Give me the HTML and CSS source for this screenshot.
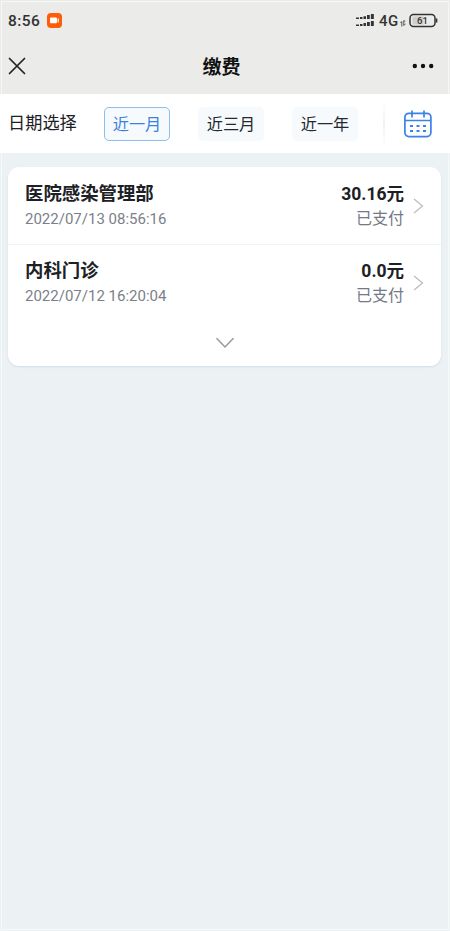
FILE: index.html
```html
<!DOCTYPE html>
<html lang="zh-CN">
<head>
<meta charset="utf-8">
<meta name="viewport" content="width=device-width, initial-scale=1">
<title>缴费</title>
<link rel="stylesheet" href="styles.css">
</head>
<body>
<div class="screen">
  <header class="top">
    <div class="status">
      <span class="clock">8:56</span>
      <svg class="rec" width="15" height="15" viewBox="0 0 15 15"><rect width="15" height="15" rx="4" fill="#ff5c0a"/><rect x="3" y="4.6" width="7" height="5.6" rx="1" fill="#fff"/><path d="M10.400 6.300 12 5v5l-1.600-1.200z" fill="#ffd3b8"/></svg>
      <svg class="signal" width="19" height="16" viewBox="0 0 19 16" fill="#333"><path d="M0 4.500h3v1.500H0zM4 4h2.500v2H4zM7.500 3.200h2.500V6H7.500zM11 2h2.800v4H11zM14.900 1h2.900v5h-2.900zM0 11.500h3V13H0zM4 11h2.500v2H4zM7.500 10h2.500v3H7.500zM11 9h2.800v4H11zM14.900 8h2.900v5h-2.900z"/></svg>
      <span class="network">4G</span>
      <svg class="data" width="6" height="7" viewBox="0 0 6 7" fill="none" stroke="#555" stroke-width="1"><path d="M1.800 6.500V1.500L.3 3M3.800 .5v5L5.600 3.700M3.800 1h1.500"/></svg>
      <svg class="battery" width="30" height="15" viewBox="0 0 30 15"><rect x="1" y="1.500" width="25" height="12" rx="3.500" fill="#ececea" stroke="#333" stroke-width="1.500"/><path d="M3.500 3.500h11v8h-11z" fill="#cececc"/><path d="M27.600 5.500v4" stroke="#333" stroke-width="1.500"/><text x="13.500" y="11.200" text-anchor="middle" class="level">61</text></svg>
    </div>
    <nav class="titlebar">
      <svg class="close" width="18" height="18" viewBox="0 0 18 18"><path d="M1.500 1.500l15 15M16.500 1.500l-15 15" fill="none" stroke="#222" stroke-width="1.700" stroke-linecap="round"/></svg>
      <h1>缴费</h1>
      <svg class="more" width="22" height="6" viewBox="0 0 22 6" fill="#111"><circle cx="2.800" cy="3" r="2.200"/><circle cx="11" cy="3" r="2.200"/><circle cx="19.200" cy="3" r="2.200"/></svg>
    </nav>
  </header>

  <section class="filter">
    <span class="label">日期选择</span>
    <button class="chip active">近一月</button>
    <button class="chip">近三月</button>
    <button class="chip">近一年</button>
    <i class="divider"></i>
    <svg class="calendar" width="30" height="28" viewBox="0 0 30 28" fill="none" stroke="#3b82e8" stroke-width="1.700"><rect x="1.900" y="3.300" width="26" height="23.300" rx="4"/><path d="M2 10.500h26M9 .5v7M21 .5v7"/><path d="M7 16h3M13.500 16h3M20 16h3M7 21h3M13.500 21h3M20 21h3" stroke-width="2"/></svg>
  </section>

  <main class="card">
    <article class="row">
      <div class="info"><h2>医院感染管理部</h2><time>2022/07/13 08:56:16</time></div>
      <div class="pay"><strong>30.16元</strong><span>已支付</span></div>
      <svg class="arrow" width="11" height="16" viewBox="0 0 11 16"><path d="M1 1l8.500 7L1 15" fill="none" stroke="#bdbdbd" stroke-width="1.300"/></svg>
    </article>
    <article class="row">
      <div class="info"><h2>内科门诊</h2><time>2022/07/12 16:20:04</time></div>
      <div class="pay"><strong>0.0元</strong><span>已支付</span></div>
      <svg class="arrow" width="11" height="16" viewBox="0 0 11 16"><path d="M1 1l8.500 7L1 15" fill="none" stroke="#bdbdbd" stroke-width="1.300"/></svg>
    </article>
    <div class="expand"><svg width="20" height="12" viewBox="0 0 20 12"><path d="M1.500 1.300 10 10l8.500-8.700" fill="none" stroke="#999" stroke-width="1.500"/></svg></div>
  </main>
</div>
</body>
</html>
```
FILE: styles.css
```css
* { box-sizing: border-box; }
body {
  margin: 0;
  font-family: Roboto, "Noto Sans CJK SC", sans-serif;
  color: #1d2126;
}
.screen {
  position: relative;
  height: 931px;
  background: #ecf1f4;
  overflow: hidden;
}
.screen::after {
  content: "";
  position: absolute;
  inset: 1px;
  border: 1px solid rgba(255, 255, 255, .55);
  pointer-events: none;
}
h1, h2 { margin: 0; }
svg { display: block; flex: none; }
.top { height: 94px; background: #ebebe9; }
.status {
  display: flex;
  align-items: center;
  height: 40px;
  padding: 0 11px 0 8px;
  color: #333;
}
.clock { width: 39px; margin-top: 2px; font-size: 15.500px; font-weight: 500; letter-spacing: .45px; }
.signal { margin: 2px 4px 0 auto; }
.network { width: 21px; margin-top: 2px; font-size: 15px; font-weight: 500; letter-spacing: .5px; }
.data { margin: 6px 3px 0 0; }
.level { font: 500 9.500px Roboto, sans-serif; fill: #333; }
.titlebar {
  display: grid;
  grid-template-columns: 1fr auto 1fr;
  align-items: center;
  height: 54px;
  padding: 0 16px 0 8px;
}
.titlebar h1 {
  margin: 2px 0 0 1px;
  font-size: 19px;
  line-height: 28px;
  font-weight: 700;
  color: #111;
}
.close { margin-top: -2px; }
.more { justify-self: end; margin-top: -2px; }
.filter {
  display: flex;
  align-items: center;
  height: 59px;
  padding-left: 8px;
  background: #fff;
}
.label { width: 96px; font-size: 17.200px; line-height: 24px; margin-top: -1px; }
.chip {
  width: 66px;
  height: 34px;
  margin-right: 28px;
  padding: 3px 0 0;
  border: 0;
  border-radius: 5px;
  background: #f6fafd;
  color: #25292e;
  font: 16.200px/24px Roboto, "Noto Sans CJK SC", sans-serif;
}
.chip.active { border: 1px solid #8abff0; color: #3b82e0; }
.divider {
  width: 2px;
  height: 48px;
  margin: 0 18px 0 -3px;
  background: linear-gradient(#fff, #f0f1f3 50%, #fff);
}
.card {
  height: 199px;
  margin: 14px 9px 0 8px;
  background: #fff;
  border-radius: 11px;
  box-shadow: 0 1px 2px rgba(180, 195, 215, .45);
}
.row {
  display: flex;
  height: 77px;
  padding: 13px 17px 0 17px;
}
.row + .row { border-top: 1px solid #f1f3f5; padding-top: 12px; }
.row:first-child { height: 77px; }
.info { flex: 1; }
.info h2 { font-size: 18.400px; line-height: 27px; font-weight: 700; }
time { display: block; font-size: 15px; line-height: 24px; color: #7b7f88; }
.pay { display: flex; flex-direction: column; align-items: flex-end; }
.pay strong { font-size: 17.500px; line-height: 28px; font-weight: 700; }
.pay span { font-size: 16px; line-height: 21px; color: #747986; }
.arrow { margin: 18px 0 0 9px; }
.expand { display: flex; justify-content: center; padding: 16px 0 0; }
```
